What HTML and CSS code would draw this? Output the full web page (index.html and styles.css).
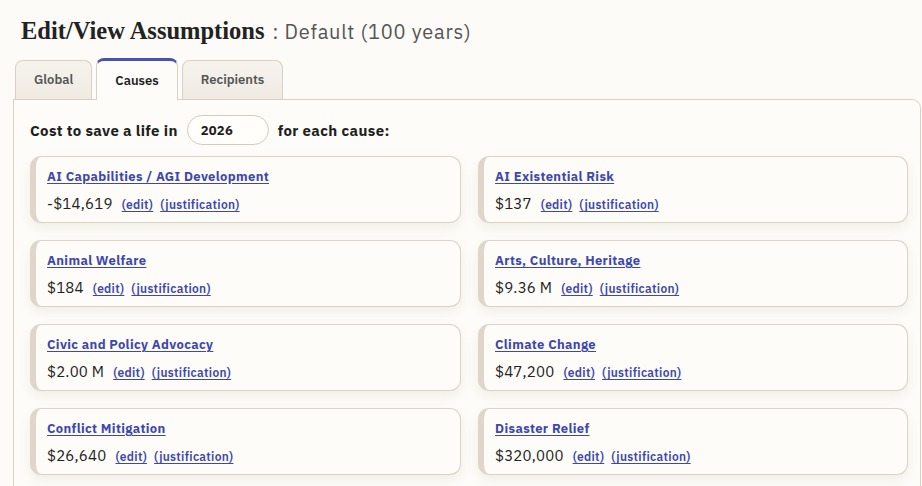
FILE: index.html
```html
<!DOCTYPE html>
<html>
<head>
<meta charset="utf-8">
<link rel="stylesheet" href="styles.css">
</head>
<body>
<div class="page">
  <h1 class="title"><span class="title-main">Edit/View Assumptions</span><span class="title-sub">: Default (100 years)</span></h1>
  <div class="tabs">
    <div class="tab">Global</div>
    <div class="tab active">Causes</div>
    <div class="tab">Recipients</div>
  </div>
  <div class="panel">
    <div class="year-row">
      <span>Cost to save a life in</span>
      <span class="year-input">2026</span>
      <span>for each cause:</span>
    </div>
    <div class="grid">
      <div class="card"><a class="cause" href="#">AI Capabilities / AGI Development</a><div class="val"><span class="amt">-$14,619</span><a href="#">(edit)</a><a href="#">(justification)</a></div></div>
      <div class="card"><a class="cause" href="#">AI Existential Risk</a><div class="val"><span class="amt">$137</span><a href="#">(edit)</a><a href="#">(justification)</a></div></div>
      <div class="card"><a class="cause" href="#">Animal Welfare</a><div class="val"><span class="amt">$184</span><a href="#">(edit)</a><a href="#">(justification)</a></div></div>
      <div class="card"><a class="cause" href="#">Arts, Culture, Heritage</a><div class="val"><span class="amt">$9.36 M</span><a href="#">(edit)</a><a href="#">(justification)</a></div></div>
      <div class="card"><a class="cause" href="#">Civic and Policy Advocacy</a><div class="val"><span class="amt">$2.00 M</span><a href="#">(edit)</a><a href="#">(justification)</a></div></div>
      <div class="card"><a class="cause" href="#">Climate Change</a><div class="val"><span class="amt">$47,200</span><a href="#">(edit)</a><a href="#">(justification)</a></div></div>
      <div class="card"><a class="cause" href="#">Conflict Mitigation</a><div class="val"><span class="amt">$26,640</span><a href="#">(edit)</a><a href="#">(justification)</a></div></div>
      <div class="card"><a class="cause" href="#">Disaster Relief</a><div class="val"><span class="amt">$320,000</span><a href="#">(edit)</a><a href="#">(justification)</a></div></div>
    </div>
  </div>
</div>
</body>
</html>
```

FILE: styles.css
```css
* { box-sizing: border-box; }
html, body {
  margin: 0;
  padding: 0;
  background: #fcfbf7;
  overflow: hidden;
  height: 486px;
}
body {
  font-family: "IBM Plex Sans", "Open Sans", "Noto Sans", sans-serif;
  color: #1f1f1f;
}
.page {
  padding: 17px 0 0 0;
}
.title {
  margin: 0 0 0 21px;
  height: 30px;
  display: flex;
  align-items: baseline;
  gap: 8px;
  font-weight: normal;
}
.title-main {
  font-family: "Liberation Serif", "DejaVu Serif", serif;
  font-weight: bold;
  font-size: 24.5px;
  color: #222;
}
.title-sub {
  font-size: 20px;
  letter-spacing: 0.75px;
  color: #555;
  font-weight: 400;
}
.tabs {
  display: flex;
  align-items: flex-end;
  gap: 4px;
  margin: 11px 0 0 15px;
  height: 41px;
  position: relative;
  z-index: 2;
}
.tab {
  height: 39px;
  padding: 0 18px 1px;
  display: flex;
  align-items: center;
  font-size: 13px;
  font-weight: 600;
  color: #555;
  background: linear-gradient(#f6f3ed, #efebe3);
  border: 1px solid #dad1c3;
  border-bottom: none;
  border-radius: 8px 8px 0 0;
}
.tab.active {
  background: #fdfcf8;
  color: #1e1e1e;
  border-top: 3px solid #4752b3;
  margin-bottom: -1px;
  height: 42px;
}
.panel {
  margin-left: 13px;
  width: 908px;
  border: 1px solid #d9d0c2;
  border-radius: 0 9px 0 0;
  background: #fdfcf8;
  padding: 15px 11px 30px 16px;
  min-height: 420px;
  position: relative;
  z-index: 1;
}
.year-row {
  display: flex;
  align-items: center;
  gap: 8px;
  font-size: 15px;
  letter-spacing: 0.35px;
  font-weight: 700;
  height: 30px;
}
.year-input {
  width: 82px;
  height: 30px;
  margin: 0 1px;
  border: 1px solid #d6ccbc;
  border-radius: 15px;
  background: #fffefb;
  display: flex;
  align-items: center;
  padding-left: 13px;
  font-size: 13px;
  letter-spacing: 0.3px;
  font-weight: 700;
}
.grid {
  margin-top: 11px;
  display: grid;
  grid-template-columns: 431px 430px;
  column-gap: 17px;
  row-gap: 17px;
}
.card {
  height: 67px;
  border: 1px solid #dcd3c5;
  border-left: 6px solid #ddd6c9;
  border-radius: 11px;
  background: #fdfcf8;
  box-shadow: 0 5px 12px rgba(120, 100, 70, 0.09);
  padding: 8px 12px 0 11px;
}
a {
  color: #3d48ae;
  text-decoration: underline;
  text-underline-offset: 2px;
}
.cause {
  font-size: 13px;
  letter-spacing: 0.35px;
  font-weight: 700;
  display: inline-block;
  line-height: 18px;
}
.val {
  display: flex;
  align-items: baseline;
  gap: 7px;
  margin-top: 8px;
  line-height: 20px;
}
.amt {
  font-size: 15px;
  letter-spacing: 0.2px;
  color: #222;
  margin-right: 2px;
}
.val a {
  font-size: 12px;
  letter-spacing: 0.3px;
  font-weight: 600;
}
```
